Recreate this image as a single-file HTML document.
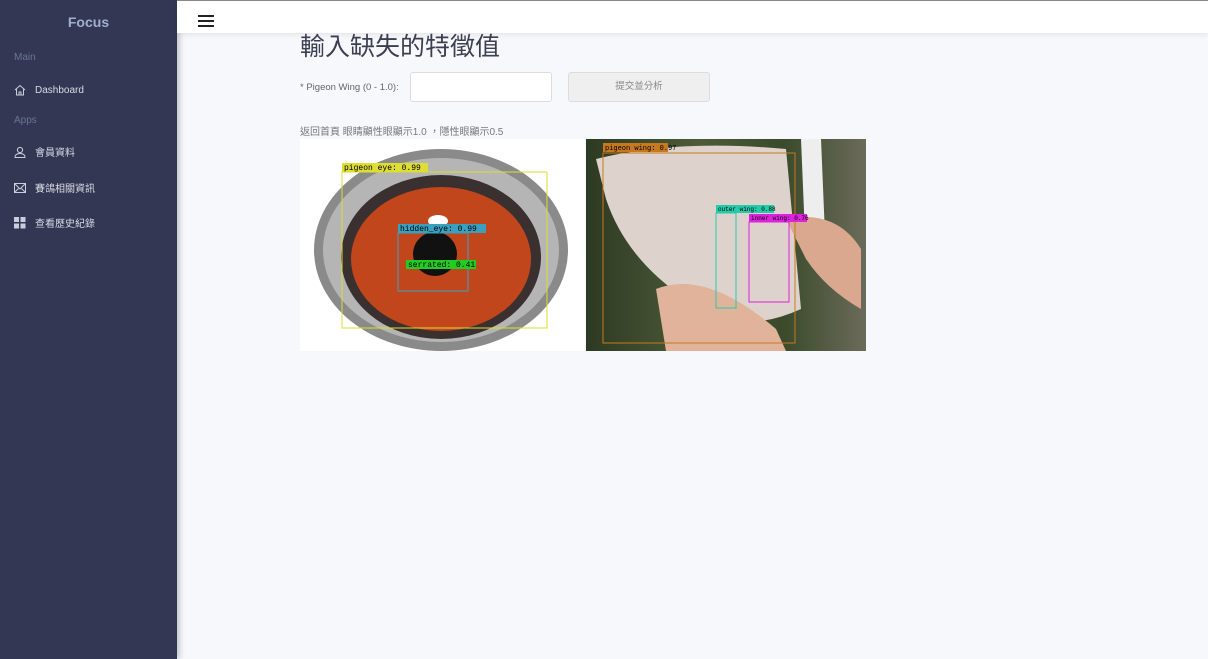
<!DOCTYPE html>
<html><head><meta charset="utf-8"><style>
*{margin:0;padding:0;box-sizing:border-box}
body{width:1208px;height:659px;overflow:hidden;background:#f7f8fc;font-family:"Liberation Sans","Noto Sans CJK TC",sans-serif;position:relative}
.side{position:absolute;left:0;top:0;width:177px;height:659px;background:#343753;box-shadow:2px 0 6px rgba(0,0,0,.25)}
.logo{position:absolute;top:14px;width:177px;text-align:center;color:#9fb0cf;font-weight:bold;font-size:14px}
.sec{position:absolute;left:14px;color:#6b7494;font-size:10px}
.item{position:absolute;left:14px;color:#d8dbe6;font-size:10px;display:flex;align-items:center}
.item svg{margin-right:9px}
.top{position:absolute;left:177px;top:0;right:0;height:33px;background:#fff;border-top:1px solid #888;box-shadow:0 2px 6px rgba(0,0,0,.08)}
.ham{position:absolute;left:198px;top:15px;width:16px}
.ham i{display:block;height:2px;background:#222;margin-bottom:3px}
h1{position:absolute;left:300px;top:27px;font-size:25px;font-weight:normal;color:#3b3f52}
.lbl{position:absolute;left:300px;top:82px;font-size:9.5px;color:#666}
.inp{position:absolute;left:410px;top:72px;width:142px;height:30px;background:#fff;border:1px solid #ddd;border-radius:3px}
.btn{position:absolute;left:568px;top:72px;width:142px;height:30px;background:#efefef;border:1px solid #ddd;border-radius:3px;font-size:9.5px;color:#888;text-align:center;line-height:28px}
.note{position:absolute;left:300px;top:123px;font-size:10px;color:#777}
.img1{position:absolute;left:300px;top:139px;width:285px;height:212px;background:#fff;overflow:hidden}
.img2{position:absolute;left:586px;top:139px;width:280px;height:212px;background:linear-gradient(90deg,#2d3a22,#4d5b3a 40%,#3a4a2a 70%,#6b6b5a);overflow:hidden}
</style></head><body>
<div class="side">
<div class="logo">Focus</div>
<div class="sec" style="top:52px">Main</div>
<div class="item" style="top:84px"><svg width="12" height="12" viewBox="0 0 12 12" fill="none" stroke="#ccd" stroke-width="1"><path d="M1 6L6 1.5 11 6M2.5 5v6h7V5M5 11V8h2v3"/></svg>Dashboard</div>
<div class="sec" style="top:115px">Apps</div>
<div class="item" style="top:144px"><svg width="12" height="12" viewBox="0 0 12 12" fill="none" stroke="#ccd"><circle cx="6" cy="4" r="2.6"/><path d="M1 11.5c0-3 2.5-4 5-4s5 1 5 4z"/></svg>會員資料</div>
<div class="item" style="top:180px"><svg width="12" height="10" viewBox="0 0 12 10" fill="none" stroke="#ccd"><rect x=".5" y=".5" width="11" height="9"/><path d="M.5 .5L6 6l5.5-5.5M.5 9.5l4-4M11.5 9.5l-4-4"/></svg>賽鴿相關資訊</div>
<div class="item" style="top:215px"><svg width="12" height="12" viewBox="0 0 12 12" fill="#ccd"><rect x="0" y="0" width="5" height="5"/><rect x="6.5" y="0" width="5" height="5"/><rect x="0" y="6.5" width="5" height="5"/><rect x="6.5" y="6.5" width="5" height="5"/></svg>查看歷史紀錄</div>
</div>
<div class="top"></div>
<div class="ham"><i></i><i></i><i></i></div>
<h1>輸入缺失的特徵值</h1>
<div class="lbl">* Pigeon Wing (0 - 1.0):</div>
<div class="inp"></div>
<div class="btn">提交並分析</div>
<div class="note">返回首頁 眼睛顯性眼顯示1.0 ，隱性眼顯示0.5</div>
<div class="img1"><svg width="285" height="212">
<ellipse cx="141" cy="111" rx="127" ry="101" fill="#8a8a8a"/>
<ellipse cx="141" cy="111" rx="118" ry="92" fill="#b5b5b5"/>
<ellipse cx="141" cy="118" rx="100" ry="82" fill="#3a3030"/>
<ellipse cx="141" cy="120" rx="90" ry="72" fill="#c2461c"/>
<ellipse cx="135" cy="115" rx="22" ry="22" fill="#111"/>
<ellipse cx="138" cy="82" rx="10" ry="6" fill="#fff"/>
<rect x="42" y="33" width="205" height="156" fill="none" stroke="#dddd33"/>
<rect x="42" y="24" width="86" height="9" fill="#dddd33"/><text x="44" y="31" font-size="8" font-family="Liberation Mono">pigeon eye: 0.99</text>
<rect x="98" y="85" width="88" height="9" fill="#3aa0c0"/><text x="100" y="92" font-size="8" font-family="Liberation Mono">hidden_eye: 0.99</text>
<rect x="98" y="94" width="70" height="58" fill="none" stroke="#3aa0c0"/>
<rect x="106" y="121" width="70" height="9" fill="#22cc22"/><text x="108" y="128" font-size="8" font-family="Liberation Mono">serrated: 0.41</text>
</svg></div>
<div class="img2"><svg width="280" height="212">
<path d="M10 20 Q90 0 200 10 L215 170 Q150 200 100 160 Q40 120 20 60z" fill="#ddd3cc"/>
<path d="M215 0 L235 0 L240 120 L220 120z" fill="#eee"/>
<path d="M200 80 Q250 70 275 110 L275 170 Q240 150 220 120z" fill="#d9a88e"/>
<path d="M70 150 Q120 130 190 190 L200 212 L80 212z" fill="#e0b39a"/>
<rect x="17" y="14" width="192" height="190" fill="none" stroke="#c8781e"/>
<rect x="17" y="4" width="65" height="9" fill="#c8781e"/><text x="19" y="11" font-size="7" font-family="Liberation Mono">pigeon wing: 0.97</text>
<rect x="130" y="66" width="58" height="8" fill="#22ccaa"/><text x="132" y="72" font-size="6" font-family="Liberation Mono">outer wing: 0.88</text>
<rect x="130" y="74" width="20" height="95" fill="none" stroke="#22ccaa"/>
<rect x="163" y="75" width="58" height="8" fill="#dd22dd"/><text x="165" y="81" font-size="6" font-family="Liberation Mono">inner wing: 0.76</text>
<rect x="163" y="83" width="40" height="80" fill="none" stroke="#dd22dd"/>
</svg></div>
</body></html>
